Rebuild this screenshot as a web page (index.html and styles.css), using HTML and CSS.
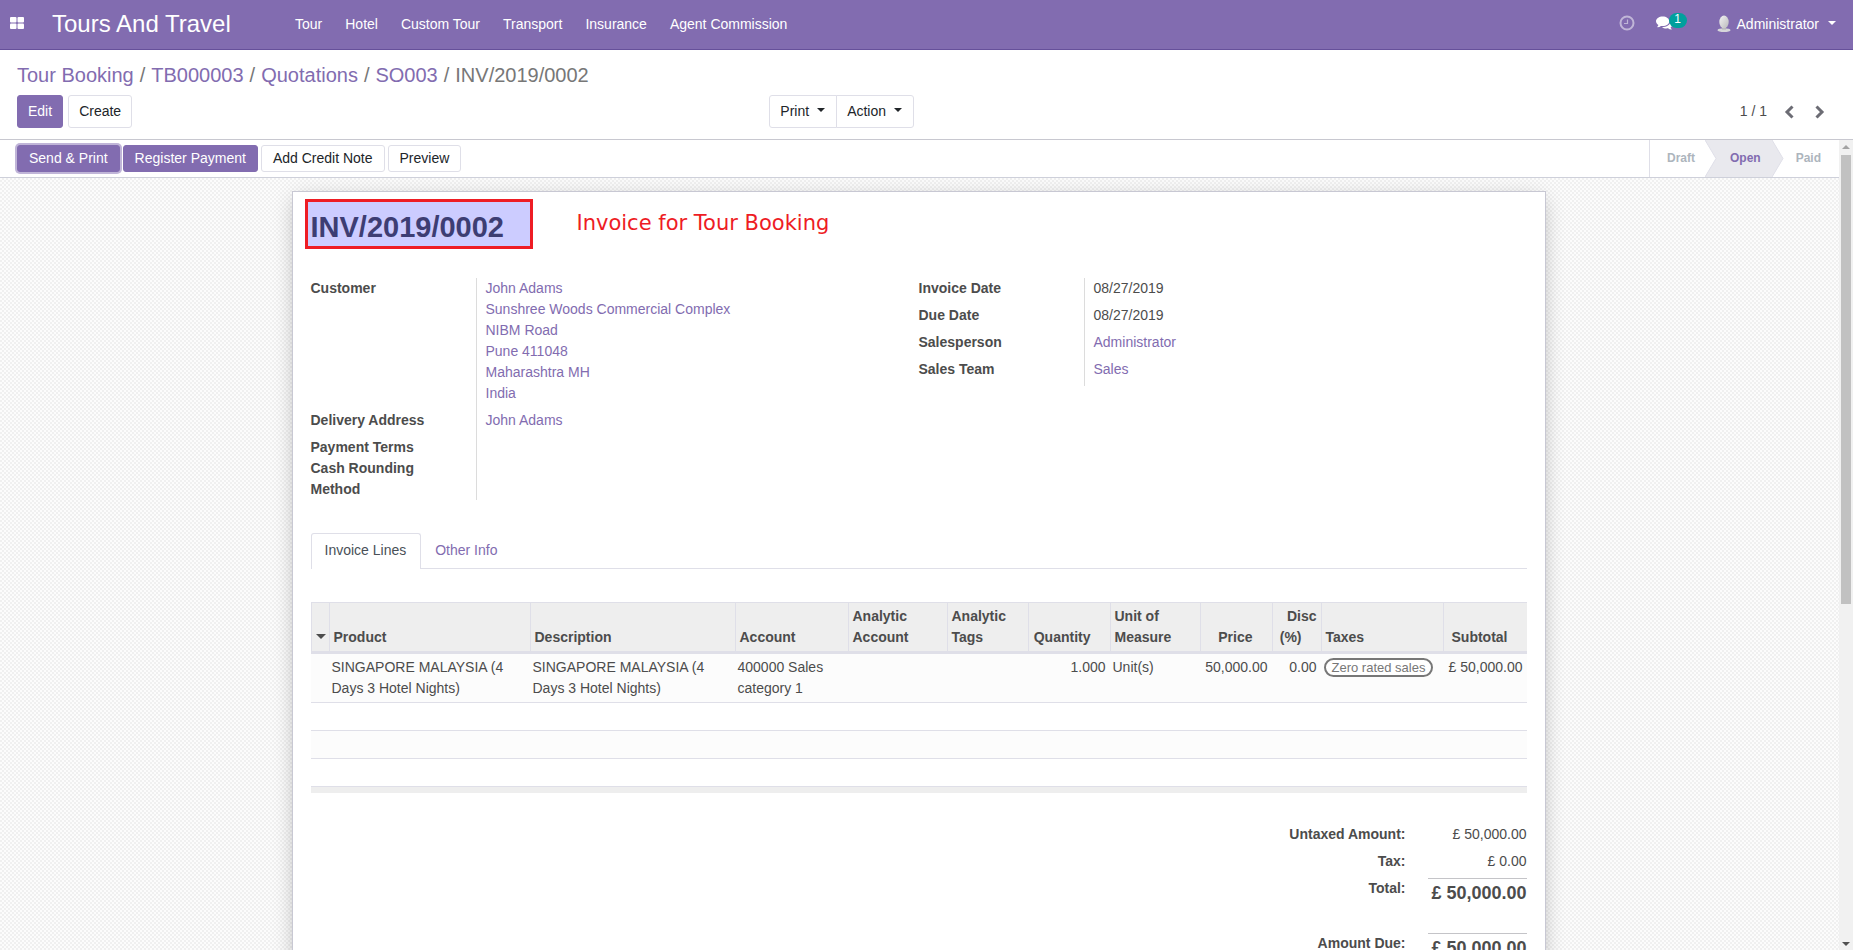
FILE: index.html
```html
<!DOCTYPE html>
<html lang="en">
<head>
<meta charset="utf-8">
<title>INV/2019/0002 - Tours And Travel</title>
<link rel="stylesheet" href="styles.css">
</head>
<body>
<header class="navbar">
  <button class="apps" aria-label="Applications">
    <svg width="14" height="12" viewBox="0 0 14 12" fill="currentColor"><rect width="6.5" height="5.5" rx="1"/><rect x="7.5" width="6.5" height="5.5" rx="1"/><rect y="6.5" width="6.5" height="5.5" rx="1"/><rect x="7.5" y="6.5" width="6.5" height="5.5" rx="1"/></svg>
  </button>
  <a class="brand" href="#">Tours And Travel</a>
  <nav class="menu">
    <a href="#">Tour</a><a href="#">Hotel</a><a href="#">Custom Tour</a><a href="#">Transport</a><a href="#">Insurance</a><a href="#">Agent Commission</a>
  </nav>
  <div class="systray">
    <button class="activities" aria-label="Activities">
      <svg width="16" height="16" viewBox="0 0 16 16" fill="none" stroke="currentColor"><circle cx="8" cy="8" r="6.5" stroke-width="2"/><path d="M8.5 4.5v4H5" stroke-width="1.2"/></svg>
    </button>
    <button class="messages" aria-label="Messages">
      <svg width="17" height="14" viewBox="0 0 17 14" fill="currentColor"><path d="M6.7 0.5c3.6 0 6.6 2.1 6.6 4.8s-3 4.8-6.6 4.8c-.6 0-1.200-.05-1.700-.15C4 10.700 2.800 11.200 1.500 11.300c-.3 0-.4-.3-.2-.5.5-.5.9-1.100 1.100-1.800C.9 8.100 0 6.800 0 5.300 0 2.600 3.100.5 6.700.5z"/><path d="M14.400 4.300c1.500.8 2.500 2.100 2.500 3.500 0 1.500-.9 2.700-2.300 3.600.2.700.6 1.200 1.100 1.700.2.200.1.500-.2.500-1.300-.1-2.500-.6-3.500-1.300-.5.1-1.100.15-1.700.15-1.700 0-3.300-.5-4.400-1.300 4.500.1 8.600-2.200 8.600-5.900 0-.3 0-.6-.1-.95z"/></svg>
      <span class="badge">1</span>
    </button>
    <button class="user">
      <svg width="14" height="18" viewBox="0 0 14 18"><defs><linearGradient id="face" x1="0" x2="1" y1="0" y2="1"><stop offset="0" stop-color="#f4f4f4"/><stop offset="1" stop-color="#b9b9bb"/></linearGradient></defs><ellipse cx="7" cy="15.200" rx="6.500" ry="1.900" fill="#d6d6da"/><path d="M5 11h4v3.500H5z" fill="#b4b4b8"/><ellipse cx="7" cy="7" rx="4.700" ry="6.500" fill="url(#face)"/></svg>
      Administrator <span class="caret"></span>
    </button>
  </div>
</header>

<section class="control-panel">
  <nav class="breadcrumb" aria-label="Breadcrumb">
    <a href="#">Tour Booking</a><span>/</span><a href="#">TB000003</a><span>/</span><a href="#">Quotations</a><span>/</span><a href="#">SO003</a><span>/</span>INV/2019/0002
  </nav>
  <div class="cp-row">
    <div class="cp-left"><button class="btn primary">Edit</button><button class="btn">Create</button></div>
    <div class="cp-center"><button class="btn">Print <span class="caret"></span></button><button class="btn">Action <span class="caret"></span></button></div>
    <div class="pager">
      <span>1 / 1</span>
      <button aria-label="Previous"><svg width="10" height="14" viewBox="0 0 10 14" fill="none" stroke="currentColor" stroke-width="3"><path d="M8.500 1.500L3 7l5.500 5.500"/></svg></button>
      <button aria-label="Next"><svg width="10" height="14" viewBox="0 0 10 14" fill="none" stroke="currentColor" stroke-width="3"><path d="M1.500 1.500L7 7l-5.500 5.500"/></svg></button>
    </div>
  </div>
</section>

<div class="content">
  <main class="form-view">
    <div class="statusbar">
      <div class="actions">
        <button class="btn primary focused">Send &amp; Print</button><button class="btn primary">Register Payment</button><button class="btn">Add Credit Note</button><button class="btn">Preview</button>
      </div>
      <div class="stages">
        <button>Draft</button>
        <svg width="12" height="37" viewBox="0 0 12 37"><path d="M0 0h12v37H0z" fill="#e9e9ee"/><path d="M0 0l11 18.500L0 37z" fill="#fff"/><path d="M0 0l11 18.500L0 37" fill="none" stroke="#dfdfe8"/></svg>
        <button class="current">Open</button>
        <svg width="12" height="37" viewBox="0 0 12 37"><path d="M0 0l11 18.500L0 37z" fill="#e9e9ee"/><path d="M0 0l11 18.500L0 37" fill="none" stroke="#dfdfe8"/></svg>
        <button>Paid</button>
      </div>
    </div>
    <div class="sheet-bg">
      <article class="sheet">
        <div class="title-row">
          <h1>INV/2019/0002</h1>
          <p class="note">Invoice for Tour Booking</p>
        </div>
        <div class="groups">
          <dl class="group">
            <dt>Customer</dt>
            <dd><a href="#">John Adams<br>Sunshree Woods Commercial Complex<br>NIBM Road<br>Pune 411048<br>Maharashtra MH<br>India</a></dd>
            <dt>Delivery Address</dt><dd><a href="#">John Adams</a></dd>
            <dt class="tight">Payment Terms</dt><dd class="tight"></dd>
            <dt class="tight">Cash Rounding Method</dt><dd class="tight"></dd>
          </dl>
          <dl class="group">
            <dt>Invoice Date</dt><dd>08/27/2019</dd>
            <dt>Due Date</dt><dd>08/27/2019</dd>
            <dt>Salesperson</dt><dd><a href="#">Administrator</a></dd>
            <dt>Sales Team</dt><dd><a href="#">Sales</a></dd>
          </dl>
        </div>
        <div class="tabs" role="tablist">
          <button class="active" role="tab" aria-selected="true">Invoice Lines</button><button role="tab" aria-selected="false">Other Info</button>
        </div>
        <table class="lines">
          <colgroup><col class="c-handle"><col class="c-product"><col class="c-desc"><col class="c-account"><col class="c-analytic"><col class="c-tags"><col class="c-qty"><col class="c-uom"><col class="c-price"><col class="c-disc"><col class="c-taxes"><col class="c-subtotal"></colgroup>
          <thead>
            <tr><th class="handle"><span class="caret"></span></th><th>Product</th><th>Description</th><th>Account</th><th>Analytic Account</th><th>Analytic Tags</th><th class="num">Quantity<i></i></th><th>Unit of Measure</th><th class="num">Price<i></i></th><th class="num">Disc (%)<i></i></th><th>Taxes</th><th class="num">Subtotal<i></i></th></tr>
          </thead>
          <tbody>
            <tr><td></td><td>SINGAPORE MALAYSIA (4 Days 3 Hotel Nights)</td><td>SINGAPORE MALAYSIA (4 Days 3 Hotel Nights)</td><td>400000 Sales category 1</td><td></td><td></td><td class="num">1.000</td><td>Unit(s)</td><td class="num">50,000.00</td><td class="num">0.00</td><td><span class="tag">Zero rated sales</span></td><td class="num">£ 50,000.00</td></tr>
            <tr><td colspan="12"></td></tr>
            <tr><td colspan="12"></td></tr>
            <tr><td colspan="12"></td></tr>
          </tbody>
          <tfoot><tr><td colspan="12"></td></tr></tfoot>
        </table>
        <dl class="totals">
          <dt>Untaxed Amount:</dt><dd>£ 50,000.00</dd>
          <dt>Tax:</dt><dd>£ 0.00</dd>
          <dt>Total:</dt><dd class="big">£ 50,000.00</dd>
          <dt>Amount Due:</dt><dd class="big">£ 50,000.00</dd>
        </dl>
      </article>
    </div>
  </main>
  <div class="scrollbar" aria-hidden="true">
    <span class="up"></span><span class="thumb"></span><span class="down"></span>
  </div>
</div>
</body>
</html>
```
FILE: styles.css
```css
* { box-sizing: border-box; }
body {
  margin: 0;
  height: 100vh;
  display: flex;
  flex-direction: column;
  overflow: hidden;
  font: 14px/21px "Liberation Sans", Arial, sans-serif;
  color: #4c4c4c;
  background: #fff;
}
a { color: #826cb0; text-decoration: none; }
button { font: inherit; color: inherit; background: none; border: 0; padding: 0; }
svg { display: block; flex: none; }
h1, p, dl, dd { margin: 0; }
.caret {
  display: inline-block;
  flex: none;
  border: 4px solid transparent;
  border-top-color: currentColor;
  border-bottom: 0;
}

/* top bar */
.navbar {
  flex: none;
  display: flex;
  align-items: center;
  height: 50px;
  padding-bottom: 1px;
  background: #826cb0;
  border-bottom: 1px solid #66509a;
  color: #fff;
}
.navbar a { color: #fff; }
.apps { padding: 0 28px 2px 10px; }
.brand { width: 243px; font-size: 24px; line-height: 36px; }
.menu { display: flex; gap: 23px; }
.systray { display: flex; align-items: center; margin-left: auto; padding-right: 17px; }
.activities { opacity: .5; padding-bottom: 2px; }
.messages { display: flex; padding: 0 0 2px 21px; }
.badge {
  width: 18px;
  height: 15px;
  margin: -3px 0 3px -4px;
  border-radius: 8px;
  background: #00a09d;
  font-size: 12px;
  line-height: 13px;
}
.user { display: flex; align-items: center; gap: 6px; margin-left: 30px; }
.user .caret { margin: 0 0 3px 3px; }

/* breadcrumb, buttons, pager */
.control-panel { flex: none; height: 90px; padding: 10px 17px 0; border-bottom: 1px solid #c8c8d0; }
.breadcrumb { font-size: 20px; line-height: 30px; color: #777; }
.breadcrumb span { padding: 0 6px; }
.cp-row { display: grid; grid-template-columns: 1fr 1fr 1fr; margin-top: 5px; }
.cp-left { display: flex; gap: 5px; }
.btn {
  display: inline-flex;
  align-items: center;
  gap: 8px;
  padding: 5px 10px;
  border: 1px solid #dfdfe8;
  border-radius: 3px;
  background: #fff;
  color: #212529;
}
.btn.primary { background: #826cb0; border-color: #826cb0; color: #fff; }
.btn .caret { margin-bottom: 3px; }
.cp-center { display: flex; padding-left: 146px; }
.cp-center .btn { height: 33px; padding: 5px 11px 5px 10px; }
.cp-center .btn:first-child { border-radius: 3px 0 0 3px; }
.cp-center .btn:last-child { border-radius: 0 3px 3px 0; margin-left: -1px; }
.pager { display: flex; align-items: center; justify-content: flex-end; padding-right: 11px; }
.pager button { color: #6c6c74; margin-left: 21px; }
.pager span { margin-right: -4px; }

/* status bar */
.content { flex: 1; display: flex; min-height: 0; }
.form-view { flex: 1; display: flex; flex-direction: column; min-width: 0; }
.statusbar { flex: none; display: flex; justify-content: space-between; height: 38px; border-bottom: 1px solid #ced0da; }
.actions { display: flex; align-items: center; gap: 3px; padding-left: 17px; }
.actions .btn { padding: 2px 11px; }
.btn.focused { box-shadow: 0 0 0 2px #c0b5d8; }
.stages { display: flex; border-left: 1px solid #dfdfe8; font-size: 12px; font-weight: 700; color: #adb5bd; }
.stages button { padding: 0 10px 0 17px; }
.stages .current { padding: 0 11px 0 13px; background: #e9e9ee; color: #826cb0; }
.stages button:last-child { padding: 0 18px 0 12px; }

/* sheet */
.sheet-bg {
  flex: 1;
  min-height: 0;
  padding: 13px 17px 0 15px;
  overflow: hidden;
  background: repeating-conic-gradient(#f0f0f0 0 25%, #fcfcfc 0 50%) 0 0 / 4px 4px;
}
.sheet {
  max-width: 1254px;
  min-height: 1100px;
  margin: 0 auto;
  padding: 7px 18px;
  border: 1px solid #c8c8d3;
  background: #fff;
  box-shadow: 0 5px 20px -4px rgba(0, 0, 0, .3);
}
.title-row { display: flex; align-items: flex-start; gap: 44px; margin: 0 0 29px -6px; }
h1 {
  width: 228px;
  height: 50px;
  padding: 4px 3px 0;
  border: 3px solid #ee1c24;
  background: #ccccff;
  color: #3d3d73;
  font-size: 29px;
  line-height: 42px;
}
.note { font: 21px/33px "DejaVu Sans", sans-serif; color: #ee1c24; padding-top: 8px; }
.groups { display: grid; grid-template-columns: 1fr 1fr; align-items: start; }
.group { display: grid; grid-template-columns: 166px 1fr; }
.group dt { padding-right: 40px; font-weight: 700; border-right: 1px solid #dcdcdc; }
.group dd { padding: 0 0 6px 9px; }
.group dd.tight { padding-bottom: 0; }

/* notebook */
.tabs { display: flex; margin: 33px 0; box-shadow: inset 0 -1px #dfdfe8; }
.tabs button { padding: 6px 14px 8px 13px; border: 1px solid transparent; border-bottom: 0; color: #826cb0; }
.tabs .active { background: #fff; border-color: #dfdfe8; border-radius: 3px 3px 0 0; color: #495057; }
.lines { width: 100%; table-layout: fixed; border-collapse: separate; border-spacing: 0; }
.c-handle { width: 18px; }
.c-product { width: 201px; }
.c-desc { width: 205px; }
.c-account { width: 113px; }
.c-analytic { width: 99px; }
.c-tags { width: 81px; }
.c-qty { width: 82px; }
.c-uom { width: 90px; }
.c-price { width: 72px; }
.c-disc { width: 49px; }
.c-taxes { width: 122px; }
.c-subtotal { width: 84px; }
.lines th {
  padding: 3px 4px;
  border: solid #dfdfe8;
  border-width: 1px 0 3px 1px;
  background: #eee;
  text-align: left;
  vertical-align: bottom;
}
.lines .handle .caret { border-width: 5px 5px 0; vertical-align: 3px; }
.lines td { height: 28px; padding: 3px; border-bottom: 1px solid #dfdfe8; vertical-align: top; }
.lines .num { text-align: right; padding-right: 4px; }
.lines i { display: inline-block; width: 15px; }
.lines tbody tr:nth-child(odd) { background: #fcfcfc; }
.lines tfoot td { height: 6px; padding: 0; border: 0; background: #eee; }
.tag {
  display: inline-block;
  padding: 0 6px;
  border: 2px solid #777;
  border-radius: 10px;
  background: #fff;
  color: #777;
  font-size: 13px;
  line-height: 15px;
}

/* totals */
.totals { display: grid; grid-template-columns: auto minmax(99px, auto); justify-content: end; column-gap: 22px; margin-top: 31px; text-align: right; }
.totals dt { font-weight: 700; }
.totals dd { padding-bottom: 6px; }
.totals .big { margin-bottom: 20px; padding-top: 1px; border-top: 1px solid #c4c4c8; font-size: 18px; line-height: 27px; font-weight: 700; }

/* scroll bar */
.scrollbar { flex: none; width: 14px; display: flex; flex-direction: column; align-items: center; padding: 5px 0 4px; background: #f1f1f1; }
.scrollbar .up { border: 4px solid transparent; border-top: 0; border-bottom-color: #a3a3a3; }
.scrollbar .thumb { width: 10px; height: 56%; margin-top: 6px; background: #c1c1c1; }
.scrollbar .down { margin-top: auto; border: 4px solid transparent; border-bottom: 0; border-top-color: #505050; }
```
